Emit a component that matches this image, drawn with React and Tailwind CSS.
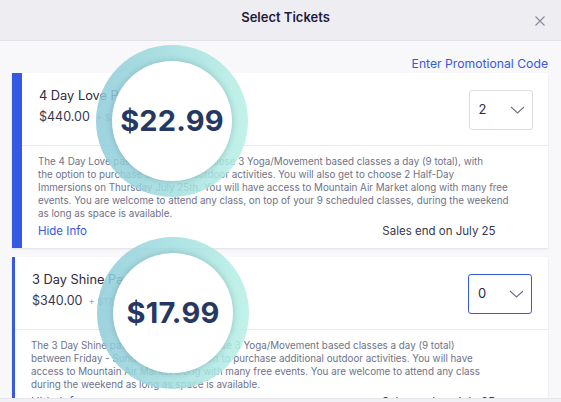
import React from 'react';

const Chevron = () => (
  <svg width="15" height="8" viewBox="0 0 15 8" fill="none" stroke="#6f7287" strokeWidth="1.1">
    <path d="M1 1l6.5 6 6.5-6" />
  </svg>
);

const QtySelect = ({ value, focused }) => (
  <div
    className={`w-[64px] h-[40px] bg-white rounded-[3px] flex items-center justify-between pl-[9px] pr-[7px] ${
      focused ? 'border-[1.5px] border-[#3659e3]' : 'border border-[#dddce4]'
    }`}
  >
    <span className="text-[13px] text-[#2d2a45]">{value}</span>
    <Chevron />
  </div>
);

const Magnifier = ({ price, className }) => (
  <div className={`absolute w-[152px] h-[152px] rounded-full bg-gradient-to-r from-[#8ccbd9]/85 to-[#b7f0e5]/85 p-[16px] ${className}`}>
    <div className="w-full h-full rounded-full bg-white shadow-[0_0_6px_rgba(30,60,80,0.25)] flex items-center justify-center">
      <span className="text-[29px] font-bold text-[#263761] tracking-[0.2px]">{price}</span>
    </div>
  </div>
);

const TicketCard = ({ title, price, fee, qty, focused, barClass, lines }) => (
  <div className="bg-white flex shadow-[0_1px_2px_rgba(0,0,0,0.1)] shrink-0">
    <div className={`${barClass} bg-[#3659e3] shrink-0`} />
    <div className="flex-1">
      <div className="h-[73px] flex justify-between items-start pl-[17px] pr-[16px] border-b border-[#ebeaf0]">
        <div className="mt-[15px]">
          <div className="text-[12.8px] leading-[16px] text-[#2d2a45]">{title}</div>
          <div className="mt-[5px] flex items-baseline gap-[6px]">
            <span className="text-[12.5px] leading-[16px] text-[#39364f]">{price}</span>
            <span className="text-[9.5px] text-[#a3a2ad]">{fee}</span>
          </div>
        </div>
        <div className="mt-[17px]">
          <QtySelect value={qty} focused={focused} />
        </div>
      </div>
      <div className="pl-[16px] pr-[40px] pt-[9px] pb-[8px]">
        <p className="text-[9.8px] leading-[13px] text-[#6f7287] whitespace-nowrap">
          {lines.map((l, i) => (
            <React.Fragment key={i}>
              {l}
              {i < lines.length - 1 && <br />}
            </React.Fragment>
          ))}
        </p>
        <div className="mt-[4px] flex justify-between items-center h-[16px] pr-[13px]">
          <span className="text-[11.5px] text-[#3659e3]">Hide Info</span>
          <span className="text-[11.5px] text-[#39364f]">Sales end on July 25</span>
        </div>
      </div>
    </div>
  </div>
);

export default function App() {
  return (
    <div className="w-[561px] h-[402px] overflow-hidden relative bg-[#f8f7fa] font-['Inter',sans-serif]">
      <div className="h-[41px] bg-[#eeedf2] border-b border-[#e3e2e8] flex items-center justify-center relative">
        <h1 className="text-[13px] font-semibold text-[#1e1a3c] pl-[10px] -mt-[4px]">Select Tickets</h1>
        <button className="absolute right-[16px] top-[16px] text-[#8a8896]">
          <svg width="10" height="10" viewBox="0 0 10 10" stroke="currentColor" strokeWidth="1.1">
            <path d="M0.5 0.5l9 9M9.5 0.5l-9 9" />
          </svg>
        </button>
      </div>

      <div className="h-[357px] overflow-hidden px-[13px] pl-[12px] flex flex-col">
        <div className="text-right pt-[9px] h-[32px]">
          <span className="text-[12.2px] text-[#3659e3] leading-[16px]">Enter Promotional Code</span>
        </div>

        <TicketCard
          title="4 Day Love Pass"
          price="$440.00"
          fee="+ $22.99 Fee"
          qty="2"
          barClass="w-[10px]"
          lines={[
            'The 4 Day Love pass allows you to choose 3 Yoga/Movement based classes a day (9 total), with',
            'the option to purchase additional outdoor activities. You will also get to choose 2 Half-Day',
            'Immersions on Thursday July 25th. You will have access to Mountain Air Market along with many free',
            'events. You are welcome to attend any class, on top of your 9 scheduled classes, during the weekend',
            'as long as space is available.',
          ]}
        />

        <div className="h-[9px] shrink-0" />

        <TicketCard
          title="3 Day Shine Pass"
          price="$340.00"
          fee="+ $17.99 Fee"
          qty="0"
          focused
          barClass="w-[3px]"
          lines={[
            'The 3 Day Shine pass allows you to choose 3 Yoga/Movement based classes a day (9 total)',
            'between Friday - Sunday with the option to purchase additional outdoor activities. You will have',
            'access to Mountain Air Market along with many free events. You are welcome to attend any class',
            'during the weekend as long as space is available.',
          ]}
        />
      </div>
      <div className="h-[4px] bg-[#f1f0f4] border-t border-[#e6e5eb]" />

      <Magnifier price="$22.99" className="left-[96px] top-[45px]" />
      <Magnifier price="$17.99" className="left-[97px] top-[237px]" />
    </div>
  );
}
